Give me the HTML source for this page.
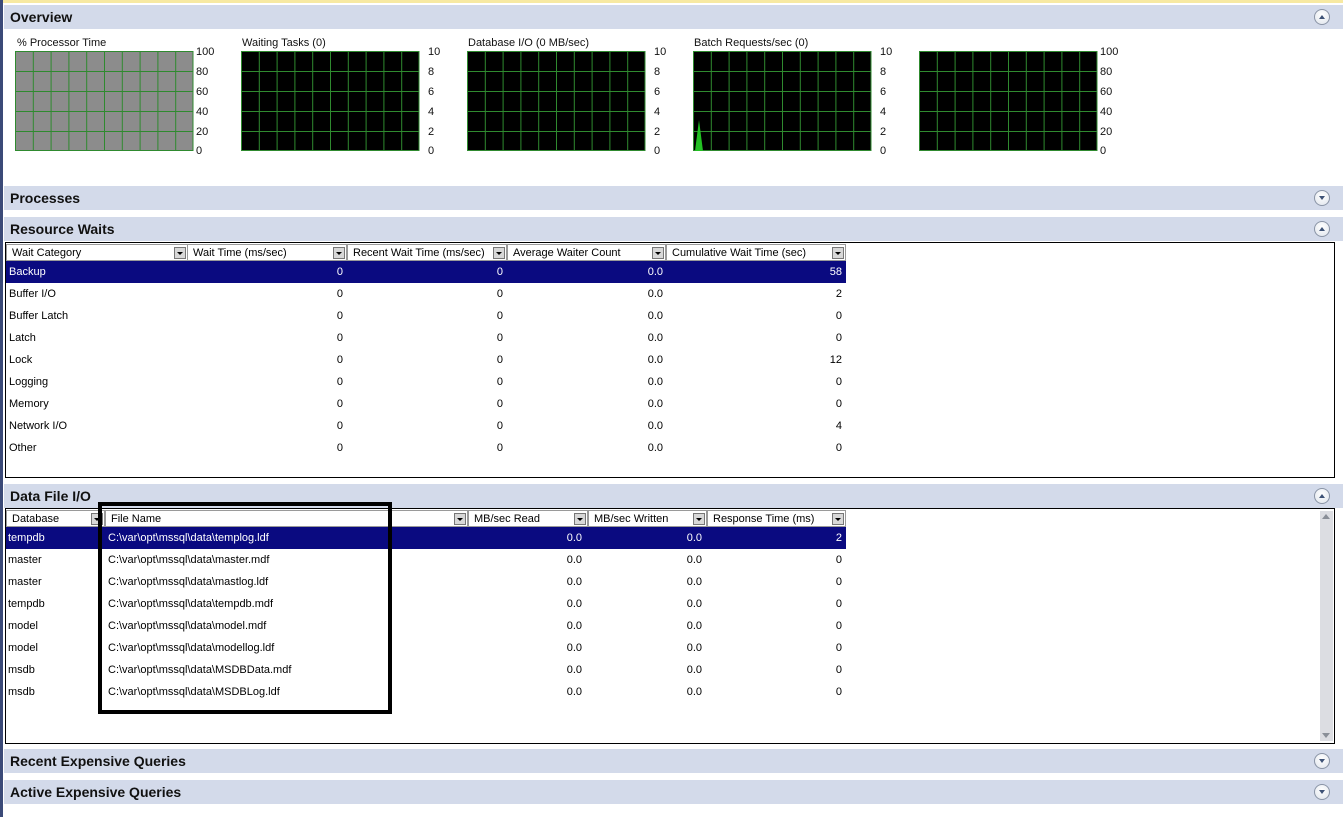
<!DOCTYPE html>
<html><head><meta charset="utf-8"><style>
*{margin:0;padding:0;box-sizing:border-box}
body{width:1343px;height:817px;position:relative;background:#fff;font-family:"Liberation Sans",sans-serif;font-size:11px;color:#000;overflow:hidden}
.a{position:absolute}
.bar{position:absolute;left:4px;right:0;height:24px;background:#d3daea;font-weight:bold;font-size:14px;padding:4px 0 0 6px;color:#111}
.btn{position:absolute;right:13px;top:4px;width:16px;height:16px;border-radius:50%;border:1px solid #8a94a6;background:radial-gradient(circle at 50% 35%,#fff,#dfe4ec)}
.btn:after{content:"";position:absolute;left:4px;top:5px;border-left:3px solid transparent;border-right:3px solid transparent}
.up:after{border-bottom:4px solid #3e5276}
.dn:after{border-top:4px solid #3e5276}
.ct{position:absolute;font-size:11px;color:#111}
.tb{position:absolute;left:5px;width:1330px;border:1px solid #000;background:#fff}
.hd{position:absolute;top:1px;height:17px;border:1px solid #9a9a9a;background:#fff;font-size:11px;padding:2px 0 0 5px;white-space:nowrap;overflow:hidden}
.dd{position:absolute;right:1px;top:2px;width:12px;height:12px;background:#d8d8d8;border:1px solid #777}
.dd:after{content:"";position:absolute;left:2px;top:4px;border-left:3px solid transparent;border-right:3px solid transparent;border-top:3px solid #000}
.row{position:absolute;left:0;width:840px;height:22px}
.row span{position:absolute;top:5px;white-space:nowrap}
.sel{background:#0a0a80;color:#fff}
.r{text-align:right}
</style></head><body>
<div class="a" style="left:0;top:0;width:1343px;height:3px;background:#f7e9a2"></div>
<div class="a" style="left:0;top:0;width:3px;height:817px;background:#3b4a78"></div>

<div class="bar" style="top:5px">Overview<div class="btn up"></div></div>

<div class="ct" style="left:17px;top:37px">% Processor Time</div>
<div class="ct" style="left:242px;top:37px">Waiting Tasks (0)</div>
<div class="ct" style="left:468px;top:37px">Database I/O (0 MB/sec)</div>
<div class="ct" style="left:694px;top:37px">Batch Requests/sec (0)</div>

<svg class="a" style="left:0;top:40px" width="1343" height="120" xmlns="http://www.w3.org/2000/svg" font-family="Liberation Sans" font-size="11">
<g transform="translate(15,11)">
<rect width="178" height="100" fill="#8c8c8c"/>
<g stroke="#2f8a2f" stroke-width="1">
<path d="M0 .5H178M0 20.5H178M0 40.5H178M0 60.5H178M0 80.5H178M0 99.5H178M.5 0V100M18.3 0V100M36.1 0V100M53.9 0V100M71.7 0V100M89.5 0V100M107.3 0V100M125.1 0V100M142.9 0V100M160.7 0V100M178 0V100"/>
</g>
<g fill="#111"><text x="181" y="4">100</text><text x="181" y="24">80</text><text x="181" y="44">60</text><text x="181" y="64">40</text><text x="181" y="84">20</text><text x="181" y="103">0</text></g>
</g>
<g transform="translate(241,11)">
<rect width="178" height="100" fill="#000"/>
<g stroke="#2f8a2f"><path d="M0 .5H178M0 20.5H178M0 40.5H178M0 60.5H178M0 80.5H178M0 99.5H178M.5 0V100M18.3 0V100M36.1 0V100M53.9 0V100M71.7 0V100M89.5 0V100M107.3 0V100M125.1 0V100M142.9 0V100M160.7 0V100M178 0V100"/></g>
<g fill="#111"><text x="187" y="4">10</text><text x="187" y="24">8</text><text x="187" y="44">6</text><text x="187" y="64">4</text><text x="187" y="84">2</text><text x="187" y="103">0</text></g>
</g>
<g transform="translate(467,11)">
<rect width="178" height="100" fill="#000"/>
<g stroke="#2f8a2f"><path d="M0 .5H178M0 20.5H178M0 40.5H178M0 60.5H178M0 80.5H178M0 99.5H178M.5 0V100M18.3 0V100M36.1 0V100M53.9 0V100M71.7 0V100M89.5 0V100M107.3 0V100M125.1 0V100M142.9 0V100M160.7 0V100M178 0V100"/></g>
<g fill="#111"><text x="187" y="4">10</text><text x="187" y="24">8</text><text x="187" y="44">6</text><text x="187" y="64">4</text><text x="187" y="84">2</text><text x="187" y="103">0</text></g>
</g>
<g transform="translate(693,11)">
<rect width="178" height="100" fill="#000"/>
<g stroke="#2f8a2f"><path d="M0 .5H178M0 20.5H178M0 40.5H178M0 60.5H178M0 80.5H178M0 99.5H178M.5 0V100M18.3 0V100M36.1 0V100M53.9 0V100M71.7 0V100M89.5 0V100M107.3 0V100M125.1 0V100M142.9 0V100M160.7 0V100M178 0V100"/></g>
<path d="M2 100L6 69L10 100Z" fill="#22c022"/>
<g fill="#111"><text x="187" y="4">10</text><text x="187" y="24">8</text><text x="187" y="44">6</text><text x="187" y="64">4</text><text x="187" y="84">2</text><text x="187" y="103">0</text></g>
</g>
<g transform="translate(919,11)">
<rect width="178" height="100" fill="#000"/>
<g stroke="#2f8a2f"><path d="M0 .5H178M0 20.5H178M0 40.5H178M0 60.5H178M0 80.5H178M0 99.5H178M.5 0V100M18.3 0V100M36.1 0V100M53.9 0V100M71.7 0V100M89.5 0V100M107.3 0V100M125.1 0V100M142.9 0V100M160.7 0V100M178 0V100"/></g>
<g fill="#111"><text x="181" y="4">100</text><text x="181" y="24">80</text><text x="181" y="44">60</text><text x="181" y="64">40</text><text x="181" y="84">20</text><text x="181" y="103">0</text></g>
</g>
</svg>

<div class="bar" style="top:186px">Processes<div class="btn dn"></div></div>
<div class="bar" style="top:217px">Resource Waits<div class="btn up"></div></div>

<div class="tb" style="top:242px;height:236px">
<div class="hd" style="left:0;width:182px">Wait Category<div class="dd"></div></div>
<div class="hd" style="left:181px;width:160px">Wait Time (ms/sec)<div class="dd"></div></div>
<div class="hd" style="left:341px;width:160px">Recent Wait Time (ms/sec)<div class="dd"></div></div>
<div class="hd" style="left:501px;width:159px">Average Waiter Count<div class="dd"></div></div>
<div class="hd" style="left:660px;width:180px">Cumulative Wait Time (sec)<div class="dd"></div></div>
<div id="rw"></div>
</div>

<div class="bar" style="top:484px">Data File I/O<div class="btn up"></div></div>

<div class="tb" style="top:508px;height:236px">
<div class="hd" style="left:0;width:99px">Database<div class="dd"></div></div>
<div class="hd" style="left:99px;width:363px">File Name<div class="dd"></div></div>
<div class="hd" style="left:462px;width:120px">MB/sec Read<div class="dd"></div></div>
<div class="hd" style="left:582px;width:119px">MB/sec Written<div class="dd"></div></div>
<div class="hd" style="left:701px;width:139px">Response Time (ms)<div class="dd"></div></div>
<div id="df"></div>
<div class="a" style="left:1314px;top:2px;width:13px;height:230px;background:#dcdde2"></div>
<div class="a" style="left:1316px;top:5px;border-left:4px solid transparent;border-right:4px solid transparent;border-bottom:5px solid #8a8f98"></div>
<div class="a" style="left:1316px;top:224px;border-left:4px solid transparent;border-right:4px solid transparent;border-top:5px solid #8a8f98"></div>
</div>

<div class="a" style="left:98px;top:502px;width:294px;height:212px;border:4px solid #000"></div>

<div class="bar" style="top:749px">Recent Expensive Queries<div class="btn dn"></div></div>
<div class="bar" style="top:780px">Active Expensive Queries<div class="btn dn"></div></div>

<script>
var w=[["Backup",58],["Buffer I/O",2],["Buffer Latch",0],["Latch",0],["Lock",12],["Logging",0],["Memory",0],["Network I/O",4],["Other",0]];
var h="";w.forEach(function(r,i){h+='<div class="row'+(i==0?' sel':'')+'" style="top:'+(18+i*22)+'px"><span style="left:3px">'+r[0]+'</span><span class="r" style="right:503px">0</span><span class="r" style="right:343px">0</span><span class="r" style="right:183px">0.0</span><span class="r" style="right:4px">'+r[1]+'</span></div>';});
document.getElementById("rw").innerHTML=h;
var d=[["tempdb","templog.ldf",2],["master","master.mdf",0],["master","mastlog.ldf",0],["tempdb","tempdb.mdf",0],["model","model.mdf",0],["model","modellog.ldf",0],["msdb","MSDBData.mdf",0],["msdb","MSDBLog.ldf",0]];
h="";d.forEach(function(r,i){h+='<div class="row'+(i==0?' sel':'')+'" style="top:'+(18+i*22)+'px"><span style="left:2px">'+r[0]+'</span><span style="left:102px">C:\\var\\opt\\mssql\\data\\'+r[1]+'</span><span class="r" style="right:264px">0.0</span><span class="r" style="right:144px">0.0</span><span class="r" style="right:4px">'+r[2]+'</span></div>';});
document.getElementById("df").innerHTML=h;
</script>
</body></html>
